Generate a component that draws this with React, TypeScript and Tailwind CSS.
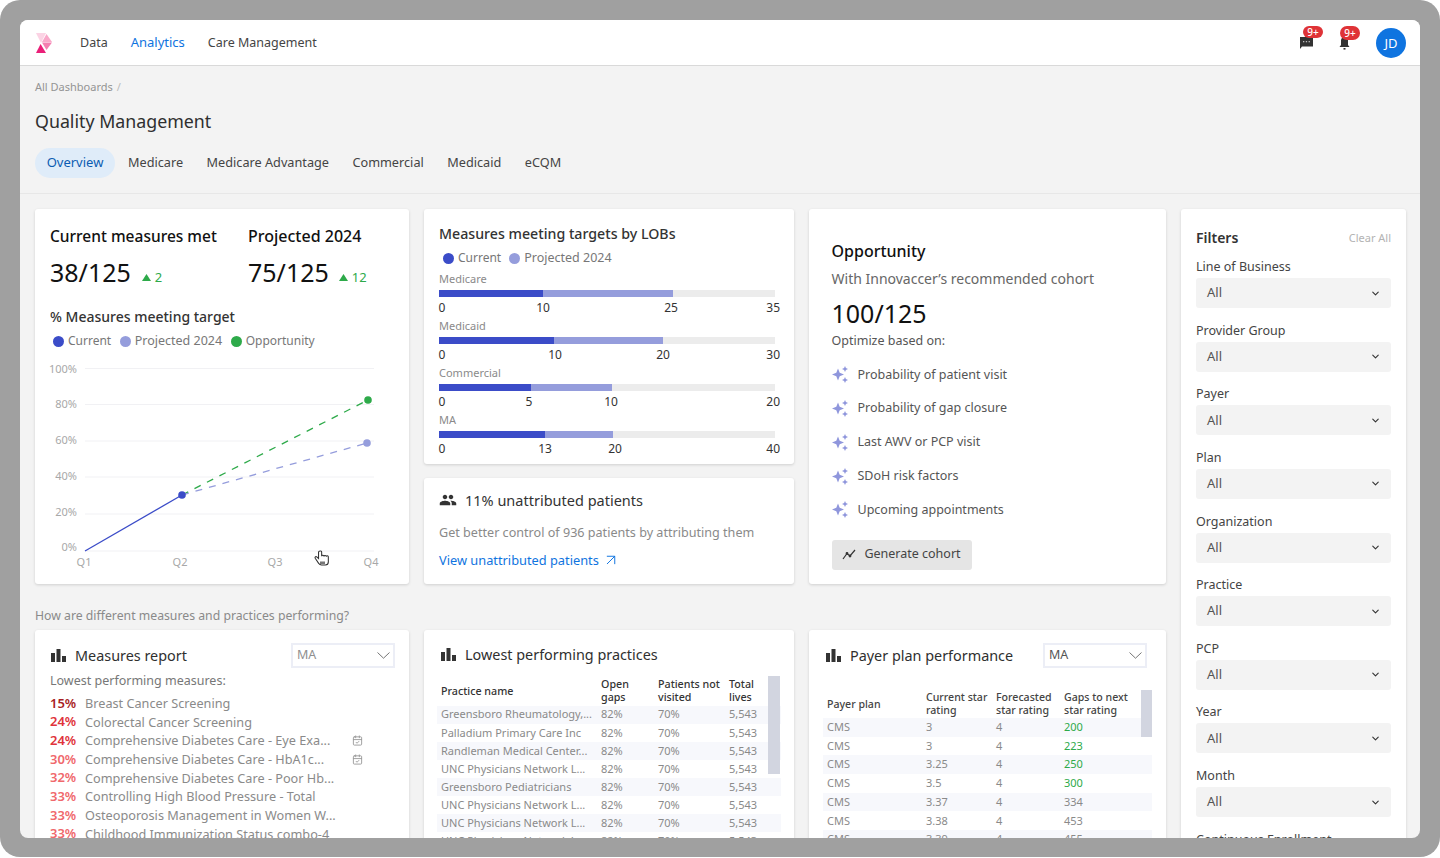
import { CalendarCheck, ChevronDown, ArrowUpRight } from 'lucide-react';
import { MdPeople } from 'react-icons/md';

const tabs = ['Medicare', 'Medicare Advantage', 'Commercial', 'Medicaid', 'eCQM'];

const lobs = [
  { name: 'Medicare', current: 104, projected: 234, ticks: [['0', 3], ['10', 104], ['25', 232], ['35', 0]] },
  { name: 'Medicaid', current: 115, projected: 224, ticks: [['0', 3], ['10', 116], ['20', 224], ['30', 0]] },
  { name: 'Commercial', current: 92, projected: 173, ticks: [['0', 3], ['5', 90], ['10', 172], ['20', 0]] },
  { name: 'MA', current: 106, projected: 174, ticks: [['0', 3], ['13', 106], ['20', 176], ['40', 0]] },
] as const;

const optimizers = [
  'Probability of patient visit',
  'Probability of gap closure',
  'Last AWV or PCP visit',
  'SDoH risk factors',
  'Upcoming appointments',
];

const measures = [
  { pct: '15%', name: 'Breast Cancer Screening', color: 'text-[#a81f25]' },
  { pct: '24%', name: 'Colorectal Cancer Screening', color: 'text-[#e0333a]' },
  { pct: '24%', name: 'Comprehensive Diabetes Care - Eye Exa...', color: 'text-[#e0333a]', cal: true },
  { pct: '30%', name: 'Comprehensive Diabetes Care - HbA1c...', color: 'text-[#f0686c]', cal: true },
  { pct: '32%', name: 'Comprehensive Diabetes Care - Poor Hb...', color: 'text-[#f0686c]' },
  { pct: '33%', name: 'Controlling High Blood Pressure - Total', color: 'text-[#f0686c]' },
  { pct: '33%', name: 'Osteoporosis Management in Women W...', color: 'text-[#f0686c]' },
  { pct: '33%', name: 'Childhood Immunization Status combo-4', color: 'text-[#f0686c]' },
];

const practices = [
  'Greensboro Rheumatology,...',
  'Palladium Primary Care Inc',
  'Randleman Medical Center...',
  'UNC Physicians Network L...',
  'Greensboro Pediatricians',
  'UNC Physicians Network L...',
  'UNC Physicians Network L...',
  'UNC Physicians Network L...',
];

const plans = [
  ['3', '200', true],
  ['3', '223', true],
  ['3.25', '250', true],
  ['3.5', '300', true],
  ['3.37', '334', false],
  ['3.38', '453', false],
  ['3.39', '455', false],
] as const;

const filters = ['Line of Business', 'Provider Group', 'Payer', 'Plan', 'Organization', 'Practice', 'PCP', 'Year', 'Month', 'Continuous Enrollment'];

function Legend({ color, label, wide }: { color: string; label: string; wide?: boolean }) {
  return (
    <span className="flex items-center gap-[4px]">
      <span className={`h-[11px] w-[11px] rounded-full ${color}`}></span>
      <span className={wide ? 'text-[12.5px]' : 'text-[12px]'}>{label}</span>
    </span>
  );
}

function Logo() {
  return (
    <svg width="17" height="20" viewBox="0 0 17 20" className="shrink-0">
      <polygon points="0,0 10,0 5,10" fill="#fbd3e4" />
      <polygon points="10.5,1 16,9 6,9" fill="#f9a8c9" />
      <polygon points="6,9.6 16,9.6 10.5,17" fill="#f47fb0" />
      <polygon points="0,20 4.6,11 10,20" fill="#ea1f78" />
    </svg>
  );
}

function Sparkle() {
  return (
    <svg width="17" height="17" viewBox="0 0 17 17" className="shrink-0" fill="#8f96dc">
      <path d="M6 2.5 L7.7 6.8 L12 8.5 L7.7 10.2 L6 14.5 L4.3 10.2 L0 8.5 L4.3 6.8 Z" />
      <path d="M13 0 L13.9 2.1 L16 3 L13.9 3.9 L13 6 L12.1 3.9 L10 3 L12.1 2.1 Z" />
      <path d="M13 11 L13.9 13.1 L16 14 L13.9 14.9 L13 17 L12.1 14.9 L10 14 L12.1 13.1 Z" />
    </svg>
  );
}

function TrendChart() {
  const rows = [
    ['100%', 368.5, 372.5],
    ['80%', 404.5, 408],
    ['60%', 441, 444],
    ['40%', 477, 480],
    ['20%', 514, 516],
    ['0%', 551, 551],
  ] as const;
  const quarters = [['Q1', 84], ['Q2', 180], ['Q3', 275], ['Q4', 371]] as const;
  // viewBox follows page pixels of the card so the points read like the reference
  return (
    <svg width="374" height="225" viewBox="35 355 374 225" className="block">
      {rows.map(([label, y, textY]) => (
        <g key={label}>
          <line x1="85" x2="374" y1={y} y2={y} stroke="#f1f1f4" strokeWidth="1" />
          <text x="77" y={textY} textAnchor="end" fontSize="11" fill="#a8a8a8">{label}</text>
        </g>
      ))}
      {quarters.map(([label, x]) => (
        <text key={label} x={x} y="566" textAnchor="middle" fontSize="11" fill="#a8a8a8">{label}</text>
      ))}
      <line x1="85" y1="551" x2="182" y2="495" stroke="#3b4cc8" strokeWidth="1.3" />
      <line x1="182" y1="495" x2="368" y2="400" stroke="#2eaa4a" strokeWidth="1.3" strokeDasharray="7 7" />
      <line x1="182" y1="495" x2="367" y2="443" stroke="#959ddc" strokeWidth="1.3" strokeDasharray="7 7" />
      <circle cx="182" cy="495" r="3.8" fill="#3b4cc8" />
      <circle cx="368" cy="400" r="3.8" fill="#2eaa4a" />
      <circle cx="367" cy="443" r="3.8" fill="#959ddc" />
      {/* hand cursor */}
      <path
        transform="translate(322 558) scale(1.15) translate(-322 -558)"
        d="M319 552.5 v6 l-1.5 -1.4 c-1 -0.8 -2 0.2 -1.4 1.2 l3 4.4 c0.6 0.8 1.4 1.3 2.4 1.3 h3.4 c1.6 0 2.6 -1.2 2.6 -2.6 v-4.4 c0 -1.2 -1.6 -1.2 -1.8 -0.2 c0 -1.2 -1.8 -1.4 -2 -0.2 c0 -1.2 -1.8 -1.3 -2 -0.2 v-3.6 c0 -1.3 -2.7 -1.3 -2.7 0.2 z"
        fill="#ffffff"
        stroke="#2f2f2f"
        strokeWidth="0.9"
      />
      <rect x="320" y="561.5" width="5" height="2.5" fill="#777" />
    </svg>
  );
}

function Select({ label, dark }: { label: string; dark?: boolean }) {
  return (
    <div className={`flex h-[25px] w-[104px] items-center justify-between border-2 border-[#eceef6] bg-white pr-[3px] pl-[4px] text-[12.5px] ${dark ? 'text-[#555]' : 'text-[#8f8f8f]'}`}>
      <span>{label}</span>
      <svg width="13" height="7" viewBox="0 0 13 7" fill="none" stroke="#666" strokeWidth="0.9">
        <path d="M0.5 0.5 L6.5 6.2 L12.5 0.5" />
      </svg>
    </div>
  );
}

function CardTitle({ label }: { label: string }) {
  return (
    <div className="flex items-center gap-[9px] text-[14.4px] text-[#2f2f2f]">
      <svg width="15" height="13" viewBox="0 0 15 13" className="shrink-0" fill="#333">
        <rect x="0" y="4" width="4" height="9" />
        <rect x="5.5" y="0" width="4" height="13" />
        <rect x="11" y="7" width="4" height="6" />
      </svg>
      <span>{label}</span>
    </div>
  );
}

export default function App() {
  return (
    <div className="h-[858px] w-[1440px] overflow-hidden bg-white font-['Noto_Sans',sans-serif]">
      <div className="h-[857px] rounded-[20px] bg-[#a0a0a0] p-[20px] pb-[19px]">
        <div className="h-[818px] overflow-hidden rounded-[8px] bg-[#f3f3f3]">
          <header className="flex h-[46px] items-center border-b-[1.5px] border-[#d9d9d9] bg-white pr-[14px] pl-[16px] text-[12.5px] leading-[18px] text-[#444]">
            <Logo />
            <nav className="ml-[27px] flex items-baseline">
              <span className="mr-[23px]">Data</span>
              <span className="mr-[23px] text-[13px] text-[#0f74e0]">Analytics</span>
              <span>Care Management</span>
            </nav>
            <div className="ml-auto flex items-center">
              <span className="relative mr-[26px] h-[12px] w-[13px]">
                <svg width="13" height="12" viewBox="0 0 13 12">
                  <path d="M0 0 H13 V9.5 H2 L0 12 Z" fill="#333" />
                  <rect x="3" y="4" width="1.3" height="1.3" fill="#bbb" />
                  <rect x="5.8" y="4" width="1.3" height="1.3" fill="#bbb" />
                  <rect x="8.6" y="4" width="1.3" height="1.3" fill="#bbb" />
                </svg>
                <span className="absolute top-[-11px] left-[3px] flex h-[12px] w-[20px] items-center justify-center rounded-full bg-[#df3337] text-[10px] leading-none font-medium text-white">
                  9+
                </span>
              </span>
              <span className="relative mr-[26px] h-[12px] w-[11px]">
                <svg width="11" height="13" viewBox="0 0 11 13">
                  <path d="M2 3.5 C2 1.3 3.5 0 5.5 0 C7.5 0 9 1.3 9 3.5 V8 L10.5 10 H0.5 L2 8 Z" fill="#333" />
                  <rect x="4.5" y="11" width="2" height="1.6" fill="#333" />
                </svg>
                <span className="absolute top-[-11px] left-[1px] flex h-[14px] w-[20px] items-center justify-center rounded-full bg-[#df3337] text-[10px] leading-none font-medium text-white">
                  9+
                </span>
              </span>
              <span className="flex h-[30px] w-[30px] items-center justify-center rounded-full bg-[#0f74e0] text-[13px] text-white">JD</span>
            </div>
          </header>

          <div className="h-[128px] border-b border-[#e7e7e7] pt-[13px] pl-[15px]">
            <div className="flex h-[16px] items-center gap-[4px] text-[11px] text-[#949494]">
              <span>All Dashboards</span>
              <span className="text-[#bbb]">/</span>
            </div>
            <h1 className="mt-[13px] text-[17.8px] leading-[26px] text-[#2f2f2f]">Quality Management</h1>
            <div className="mt-[14px] flex items-center text-[12.7px] text-[#444]">
              <span className="mr-[13px] flex h-[30px] w-[80px] items-center justify-center rounded-full bg-[#dfecf9] text-[13px] text-[#0b5cb2]">Overview</span>
              {tabs.map((tab) => (
                <span key={tab} className="mr-[23.5px]">{tab}</span>
              ))}
            </div>
          </div>

          <main className="flex gap-[15px] px-[15px] pt-[15px]">
            <div className="w-[1131px] shrink-0">
              <div className="grid grid-cols-[374px_370px_357px] gap-[15px]">
                {/* trend card */}
                <section className="relative h-[375px] rounded-[3px] bg-white shadow-[0_1px_3px_rgba(0,0,0,0.15)]">
                  <div className="flex px-[15px] pt-[16px]">
                    <div className="w-[198px]">
                      <div className="text-[15.5px] leading-[22px] font-medium text-[#111]">Current measures met</div>
                      <div className="mt-[9px] flex items-end leading-[32px]">
                        <span className="text-[25px] text-[#111]">38/125</span>
                        <span className="mb-[1px] ml-[11px] flex items-center gap-[4px] text-[13px] leading-[20px] text-[#2eaa4a]">
                          <svg width="9" height="7" viewBox="0 0 9 7"><polygon points="4.5,0 9,7 0,7" fill="#2eaa4a" /></svg>
                          2
                        </span>
                      </div>
                    </div>
                    <div>
                      <div className="text-[16px] leading-[22px] font-medium text-[#111]">Projected 2024</div>
                      <div className="mt-[9px] flex items-end leading-[32px]">
                        <span className="text-[25px] text-[#111]">75/125</span>
                        <span className="mb-[1px] ml-[10px] flex items-center gap-[4px] text-[13px] leading-[20px] text-[#2eaa4a]">
                          <svg width="9" height="7" viewBox="0 0 9 7"><polygon points="4.5,0 9,7 0,7" fill="#2eaa4a" /></svg>
                          12
                        </span>
                      </div>
                    </div>
                  </div>
                  <div className="mt-[19px] px-[15px] text-[14px] leading-[20px] font-medium text-[#333]">% Measures meeting target</div>
                  <div className="mt-[5px] flex gap-[8.5px] pl-[18px] leading-[18px] text-[#777]">
                    <Legend color="bg-[#3b4cc8]" label="Current" />
                    <Legend color="bg-[#959ddc]" label="Projected 2024" wide />
                    <Legend color="bg-[#2eaa4a]" label="Opportunity" />
                  </div>
                  <div className="absolute top-[146px] left-0">
                    <TrendChart />
                  </div>
                </section>

                {/* LOB card + unattributed */}
                <div className="flex flex-col gap-[14px]">
                  <section className="h-[255px] rounded-[3px] bg-white px-[15px] pt-[15px] shadow-[0_1px_3px_rgba(0,0,0,0.15)]">
                    <div className="text-[14.2px] leading-[20px] font-medium text-[#333]">Measures meeting targets by LOBs</div>
                    <div className="mt-[5px] flex gap-[8px] pl-[4px] leading-[18px] text-[#777]">
                      <Legend color="bg-[#3b4cc8]" label="Current" />
                      <Legend color="bg-[#959ddc]" label="Projected 2024" wide />
                    </div>
                    <div className="mt-[5px]">
                      {lobs.map((lob) => (
                        <div key={lob.name} className="h-[47px]">
                          <div className="text-[11px] leading-[14px] text-[#8a8a8a]">{lob.name}</div>
                          <div className="relative mt-[4px] h-[7px] w-[336px] bg-[#ececec]">
                            <div className="absolute inset-y-0 left-0 bg-[#959ddc]" style={{ width: lob.projected }}></div>
                            <div className="absolute inset-y-0 left-0 bg-[#3b4cc8]" style={{ width: lob.current }}></div>
                          </div>
                          <div className="relative mt-[4px] h-[14px] text-[12px] leading-[14px] text-[#333]">
                            {lob.ticks.map(([tick, center], i) =>
                              i === 3 ? (
                                <span key={i} className="absolute right-[-1px]">{tick}</span>
                              ) : (
                                <span key={i} className="absolute -translate-x-1/2" style={{ left: center }}>{tick}</span>
                              ),
                            )}
                          </div>
                        </div>
                      ))}
                    </div>
                  </section>
                  <section className="h-[106px] rounded-[3px] bg-white px-[15px] pt-[12px] shadow-[0_1px_3px_rgba(0,0,0,0.15)]">
                    <div className="flex items-center gap-[8px] text-[14.5px] leading-[20px] text-[#333]">
                      <MdPeople size={18} className="text-[#333]" />
                      <span>11% unattributed patients</span>
                    </div>
                    <div className="mt-[14px] text-[12.6px] leading-[18px] text-[#8a8a8a]">Get better control of 936 patients by attributing them</div>
                    <div className="mt-[9px] flex items-center gap-[3px] text-[12.8px] leading-[18px] text-[#0f74e0]">
                      <span>View unattributed patients</span>
                      <ArrowUpRight size={18} strokeWidth={1.3} />
                    </div>
                  </section>
                </div>

                {/* opportunity card */}
                <section className="h-[375px] rounded-[3px] bg-white pt-[30px] pl-[22.5px] shadow-[0_1px_3px_rgba(0,0,0,0.15)]">
                  <div className="text-[16px] leading-[24px] font-medium text-[#111]">Opportunity</div>
                  <div className="mt-[6px] text-[14px] leading-[20px] text-[#666]">With Innovaccer’s recommended cohort</div>
                  <div className="mt-[7px] text-[25px] leading-[34px] text-[#111]">100/125</div>
                  <div className="mt-[2px] text-[12.5px] leading-[18px] text-[#555]">Optimize based on:</div>
                  <div className="mt-[8px] flex flex-col">
                    {optimizers.map((item) => (
                      <div key={item} className="flex h-[33.75px] items-center gap-[9px] text-[12.5px] text-[#555]">
                        <Sparkle />
                        <span>{item}</span>
                      </div>
                    ))}
                  </div>
                  <div className="mt-[13px] flex h-[30px] w-[140px] items-center justify-center gap-[7px] rounded-[3px] bg-[#e5e5e5] text-[12.5px] text-[#444]">
                    <svg width="15" height="11" viewBox="0 0 15 11" fill="none" stroke="#333" strokeWidth="1.2">
                      <path d="M1 10 L5 4.5 L8 7 L13 1" />
                      <circle cx="5" cy="4.5" r="0.8" fill="#333" />
                      <circle cx="8" cy="7" r="0.8" fill="#333" />
                    </svg>
                    <span>Generate cohort</span>
                  </div>
                </section>
              </div>

              <div className="mt-[23px] text-[12.25px] leading-[18px] text-[#8a8a8a]">How are different measures and practices performing?</div>

              <div className="mt-[5px] grid grid-cols-[374px_370px_357px] gap-[15px]">
                {/* measures report */}
                <section className="h-[260px] rounded-[3px] bg-white pt-[13px] pr-[14px] pl-[15px] shadow-[0_1px_3px_rgba(0,0,0,0.15)]">
                  <div className="flex items-center justify-between">
                    <div className="ml-[1px]">
                      <CardTitle label="Measures report" />
                    </div>
                    <Select label="MA" />
                  </div>
                  <div className="mt-[4px] text-[12.5px] leading-[18px] text-[#777]">Lowest performing measures:</div>
                  <div className="mt-[4px]">
                    {measures.map((m, i) => (
                      <div key={i} className="flex h-[18.7px] items-center text-[12.7px]">
                        <span className={`w-[35px] shrink-0 text-[13px] font-semibold ${m.color}`}>{m.pct}</span>
                        <span className="w-[267px] shrink-0 whitespace-nowrap text-[#8a8a8a]">{m.name}</span>
                        {m.cal && <CalendarCheck size={11} className="text-[#999]" />}
                      </div>
                    ))}
                  </div>
                </section>

                {/* practices */}
                <section className="relative h-[260px] rounded-[3px] bg-white pt-[14px] shadow-[0_1px_3px_rgba(0,0,0,0.15)]">
                  <div className="pl-[17px]">
                    <CardTitle label="Lowest performing practices" />
                  </div>
                  <div className="mt-[11px] px-[13px] text-[11px]">
                    <div className="flex h-[29px] items-center pl-[4px] text-[10.7px] leading-[13px] font-medium text-[#333]">
                      <span className="w-[160px]">Practice name</span>
                      <span className="w-[57px]">Open<br />gaps</span>
                      <span className="w-[71px]">Patients not<br />visited</span>
                      <span>Total<br />lives</span>
                    </div>
                    {practices.map((name, i) => (
                      <div key={i} className={`flex h-[18.1px] items-center pl-[4px] text-[#8a8a8a] ${i % 2 === 0 ? 'bg-[#f7f8fc]' : ''}`}>
                        <span className="w-[160px] whitespace-nowrap">{name}</span>
                        <span className="w-[57px]">82%</span>
                        <span className="w-[71px]">70%</span>
                        <span>5,543</span>
                      </div>
                    ))}
                  </div>
                  <div className="absolute top-[46px] right-[14px] h-[98px] w-[12px] bg-[#d2d5e0]"></div>
                </section>

                {/* payer plans */}
                <section className="relative h-[260px] rounded-[3px] bg-white pt-[13px] shadow-[0_1px_3px_rgba(0,0,0,0.15)]">
                  <div className="flex items-center justify-between pr-[19px] pl-[17px]">
                    <CardTitle label="Payer plan performance" />
                    <Select label="MA" dark />
                  </div>
                  <div className="mt-[22px] px-[14px] text-[11px]">
                    <div className="flex h-[28px] items-center pl-[4px] text-[10.6px] leading-[13px] font-medium text-[#444]">
                      <span className="w-[99px]">Payer plan</span>
                      <span className="w-[70px]">Current star<br />rating</span>
                      <span className="w-[68px]">Forecasted<br />star rating</span>
                      <span>Gaps to next<br />star rating</span>
                    </div>
                    {plans.map(([rating, gaps, good], i) => (
                      <div key={i} className={`flex h-[18.7px] items-center pl-[4px] text-[#8a8a8a] ${i % 2 === 0 ? 'bg-[#f7f8fc]' : ''}`}>
                        <span className="w-[99px]">CMS</span>
                        <span className="w-[70px]">{rating}</span>
                        <span className="w-[68px]">4</span>
                        <span className={good ? 'text-[#2eaa4a]' : ''}>{gaps}</span>
                      </div>
                    ))}
                  </div>
                  <div className="absolute top-[60px] right-[14px] h-[47px] w-[11px] bg-[#d2d5e0]"></div>
                </section>
              </div>
            </div>

            {/* filters */}
            <aside className="h-[700px] w-[225px] shrink-0 rounded-[3px] bg-white px-[15px] pt-[18px] shadow-[0_1px_3px_rgba(0,0,0,0.15)]">
              <div className="flex items-center justify-between">
                <span className="text-[14px] leading-[22px] font-semibold text-[#333]">Filters</span>
                <span className="text-[11px] text-[#b3b3b3]">Clear All</span>
              </div>
              <div className="mt-[9px] flex flex-col">
                {filters.map((filter) => (
                  <div key={filter} className="h-[63.65px]">
                    <div className="text-[12.5px] leading-[18px] text-[#444]">{filter}</div>
                    <div className="mt-[2px] flex h-[30px] items-center justify-between rounded-[3px] bg-[#f3f3f3] pr-[10px] pl-[11px] text-[13px] text-[#555]">
                      <span>All</span>
                      <ChevronDown size={11} strokeWidth={2.4} className="text-[#333]" />
                    </div>
                  </div>
                ))}
              </div>
            </aside>
          </main>
        </div>
      </div>
    </div>
  );
}
